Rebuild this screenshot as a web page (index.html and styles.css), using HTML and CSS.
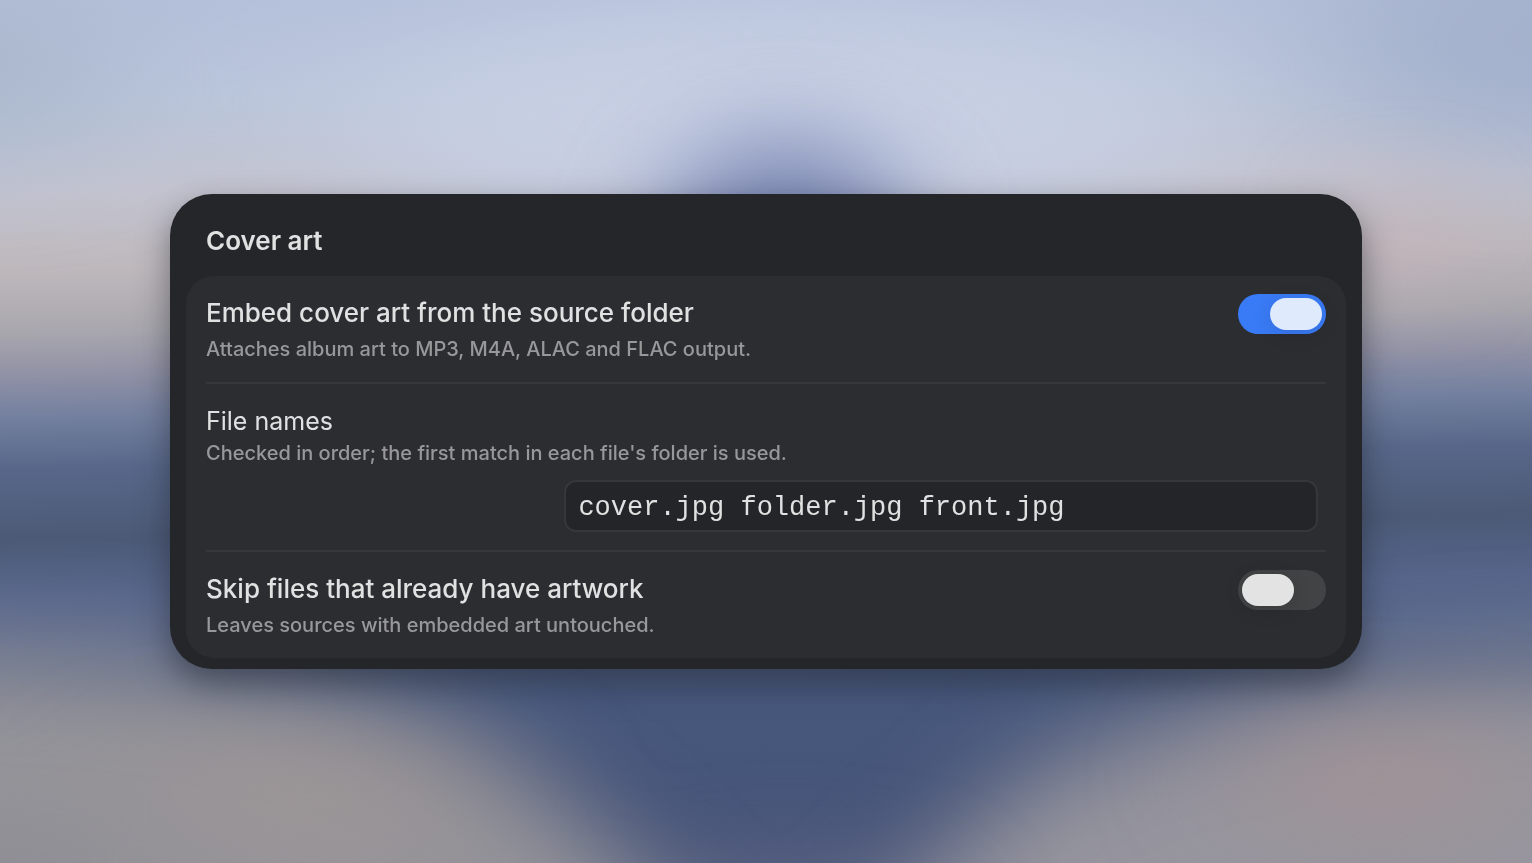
FILE: index.html
```html
<!DOCTYPE html>
<html lang="en">
<head>
  <meta charset="UTF-8">
  <meta name="viewport" content="width=device-width, initial-scale=1.0">
  <title>Cover art</title>
  <link rel="stylesheet" href="styles.css">
</head>
<body>

  <!-- Blurred desktop wallpaper -->
  <svg class="wallpaper" viewBox="0 0 1532 863" preserveAspectRatio="none" aria-hidden="true">
    <defs>
      <linearGradient id="sky" gradientUnits="userSpaceOnUse" x1="0" y1="12" x2="14" y2="875">
        <stop offset="0" stop-color="#b5c1db"/>
        <stop offset="0.1" stop-color="#bac6db"/>
        <stop offset="0.21" stop-color="#c4c4d0"/>
        <stop offset="0.3" stop-color="#beb8bc"/>
        <stop offset="0.37" stop-color="#a9a7ae"/>
        <stop offset="0.42" stop-color="#9192a6"/>
        <stop offset="0.47" stop-color="#73809f"/>
        <stop offset="0.53" stop-color="#586789"/>
        <stop offset="0.61" stop-color="#4c5a77"/>
        <stop offset="0.68" stop-color="#55648a"/>
        <stop offset="0.74" stop-color="#55658a"/>
        <stop offset="0.8" stop-color="#47587d"/>
        <stop offset="1" stop-color="#465378"/>
      </linearGradient>
      <filter id="soft" x="-50%" y="-50%" width="200%" height="200%" color-interpolation-filters="sRGB">
        <feGaussianBlur stdDeviation="50"/>
      </filter>
      <filter id="softer" x="-50%" y="-100%" width="200%" height="300%" color-interpolation-filters="sRGB">
        <feGaussianBlur stdDeviation="90 50"/>
      </filter>
    </defs>
    <rect width="1532" height="863" fill="url(#sky)"/>
    <g filter="url(#softer)">
      <ellipse cx="780" cy="120" rx="440" ry="110" fill="#c7cfe3"/>
      <ellipse cx="1560" cy="40" rx="240" ry="120" fill="#a4b1cc"/>
      <ellipse cx="-30" cy="70" rx="130" ry="90" fill="#a8b6ca"/>
    </g>
    <g filter="url(#soft)">
      <ellipse cx="785" cy="275" rx="130" ry="125" fill="#6c7aab"/>
      <ellipse cx="1400" cy="240" rx="60" ry="30" fill="#c6b2b8"/>
      <path d="M-200 645 L100 655 Q380 690 500 765 Q620 830 725 980 L725 1100 L-200 1100 Z" fill="#95949a"/>
      <path d="M1732 660 L1480 665 Q1200 695 1060 760 Q940 830 835 980 L835 1100 L1732 1100 Z" fill="#96959e"/>
    </g>
    <g filter="url(#softer)">
      <ellipse cx="1380" cy="775" rx="100" ry="45" fill="#ab9290"/>
      <ellipse cx="310" cy="790" rx="150" ry="45" fill="#a09694"/>
      <ellipse cx="-20" cy="880" rx="120" ry="40" fill="#85878e"/>
      <ellipse cx="785" cy="910" rx="80" ry="40" fill="#7f8094"/>
    </g>
  </svg>

  <main class="panel">
    <h1>Cover art</h1>

    <form class="group">
      <div class="row">
        <div class="row-text">
          <label class="title strong" for="embed">Embed cover art from the source folder</label>
          <p class="hint">Attaches album art to MP3, M4A, ALAC and FLAC output.</p>
        </div>
        <input class="switch" type="checkbox" role="switch" id="embed" checked>
      </div>

      <div class="row stacked">
        <label class="title" for="names">File names</label>
        <p class="hint">Checked in order; the first match in each file's folder is used.</p>
        <input class="names" type="text" id="names" value="cover.jpg folder.jpg front.jpg" spellcheck="false">
      </div>

      <div class="row">
        <div class="row-text">
          <label class="title strong" for="skip">Skip files that already have artwork</label>
          <p class="hint">Leaves sources with embedded art untouched.</p>
        </div>
        <input class="switch" type="checkbox" role="switch" id="skip">
      </div>
    </form>
  </main>

</body>
</html>
```

FILE: styles.css
```css
* {
  box-sizing: border-box;
}
body {
  margin: 0;
  min-height: 100vh;
  display: flex;
  align-items: center;
  padding: 0 170px;
  font-family: Inter, "Liberation Sans", sans-serif;
  color: #e1e1e2;
  background-color: #4b5a78;
}
.wallpaper {
  position: fixed;
  top: 0;
  left: 0;
  width: 100%;
  height: 100%;
  z-index: -1;
}
.panel {
  width: 100%;
  padding: 31px 16px 11px;
  background-color: #242629;
  border-radius: 42px;
  box-shadow: 0 14px 32px rgba(28, 32, 40, 0.5);
}
h1 {
  margin: 0 20px 19px;
  font-size: 26px;
  line-height: 32px;
  font-weight: 600;
}
.group {
  padding: 0 20px;
  background-color: #2c2d31;
  border-radius: 28px;
}
.row {
  display: flex;
  justify-content: space-between;
  align-items: flex-start;
  padding: 18px 0;
}
.row + .row {
  border-top: 2px solid #36373b;
}
.title {
  display: block;
  font-size: 25px;
  line-height: 38px;
}
.strong {
  font-size: 26px;
  font-weight: 500;
}
.hint {
  margin: 2px 0 0;
  font-size: 20px;
  line-height: 30px;
  font-weight: 500;
  color: #98989a;
}
.stacked {
  display: block;
}
.stacked .hint {
  margin-top: -2px;
}
.names {
  display: block;
  width: calc(68% - 8px);
  height: 52px;
  margin: 12px 8px 0 auto;
  padding: 4px 12px 0;
  font-family: "Liberation Mono", monospace;
  font-size: 27px;
  color: #e1e1e2;
  background-color: #242529;
  border: 2px solid #36373b;
  border-radius: 12px;
  outline: none;
}
.switch {
  appearance: none;
  flex: none;
  display: flex;
  width: 88px;
  height: 40px;
  margin: 0;
  padding: 4px;
  border-radius: 20px;
  background-color: #424345;
  cursor: pointer;
}
.switch::before {
  content: "";
  width: 52px;
  height: 32px;
  border-radius: 16px;
  background-color: #e3e3e3;
  box-shadow: 0 4px 20px rgba(0, 0, 0, 0.12);
}
.switch:checked {
  justify-content: flex-end;
  background-color: #397bf6;
}
.switch:checked::before {
  background-color: #dfeafd;
}
```
